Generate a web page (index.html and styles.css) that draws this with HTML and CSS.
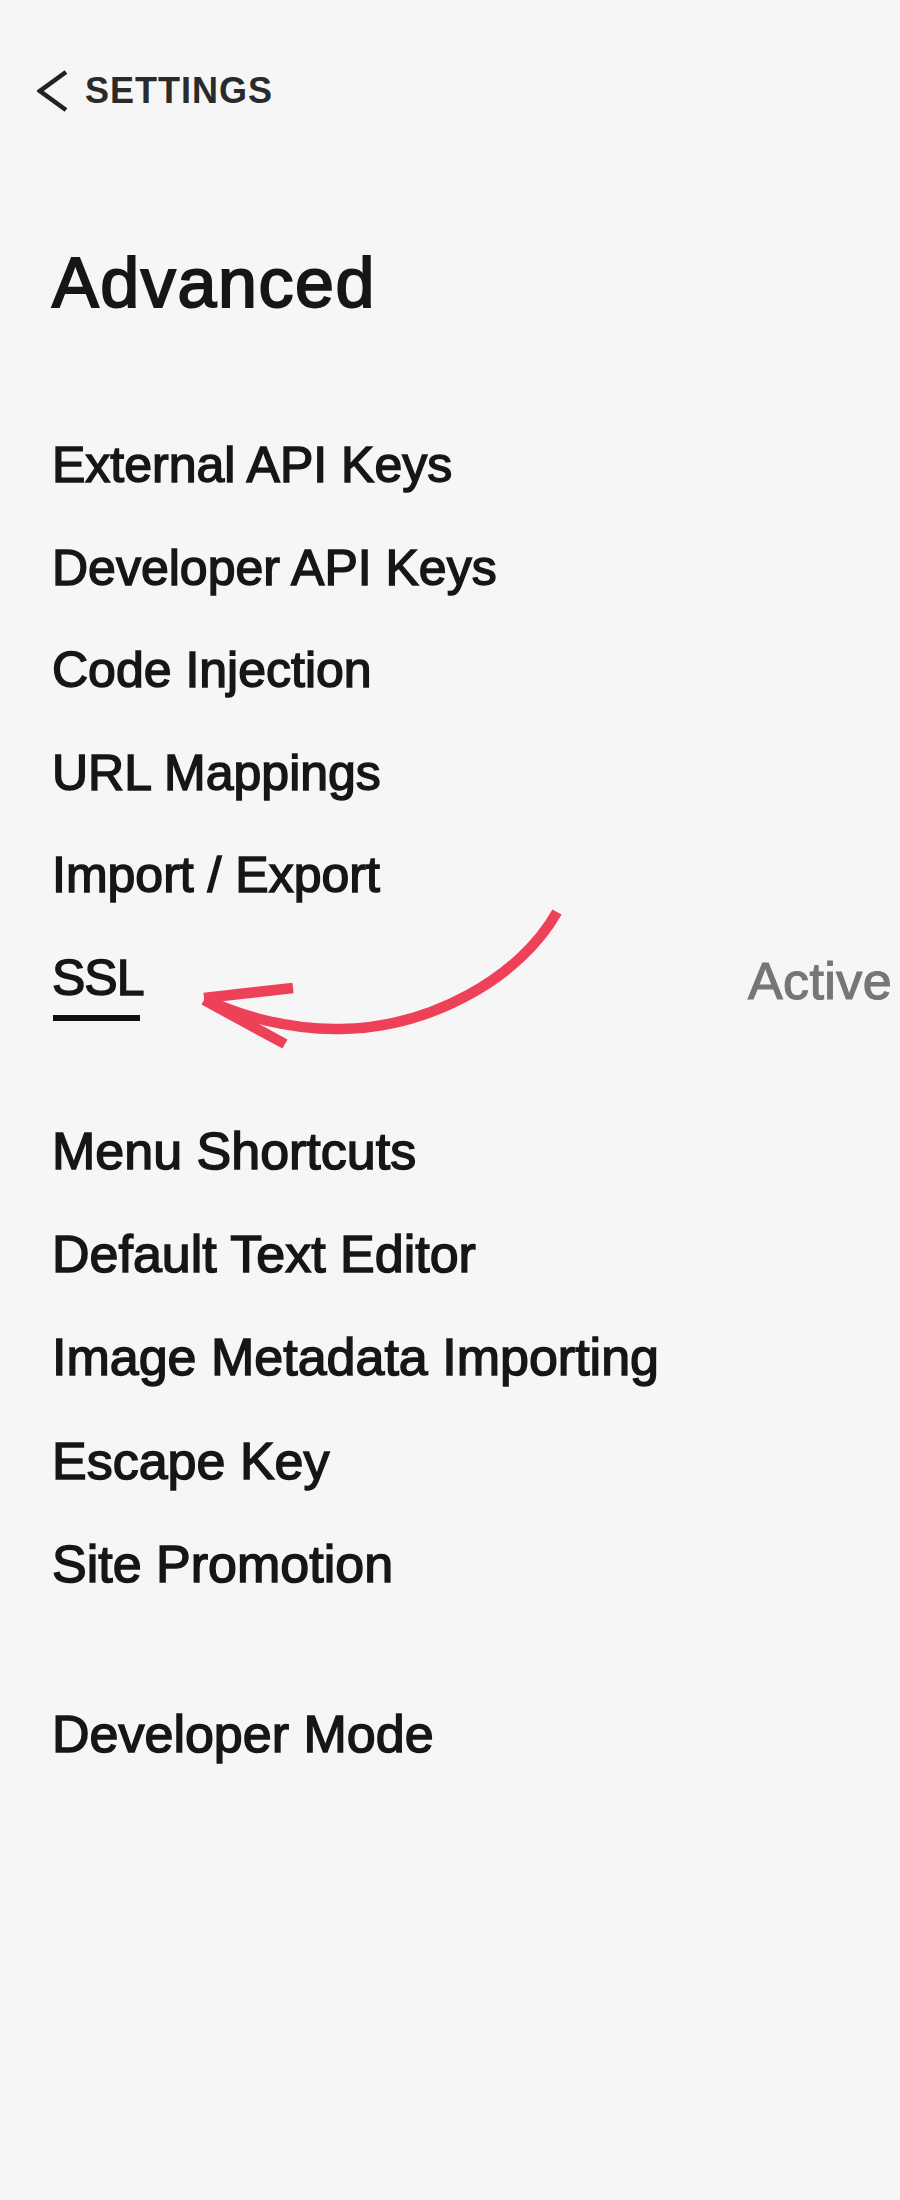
FILE: index.html
```html
<!DOCTYPE html>
<html lang="en">
<head>
<meta charset="utf-8">
<title>Advanced</title>
<link rel="stylesheet" href="styles.css">
</head>
<body>
<div class="page">
  <a class="back" href="#">
    <svg class="chev" width="32" height="42" viewBox="0 0 32 42"><polyline points="29,2 3,21 29,40" fill="none" stroke="#222" stroke-width="4.6" stroke-linejoin="miter"/></svg>
    <span class="back-label">SETTINGS</span>
  </a>
  <h1 class="title">Advanced</h1>
  <ul class="list list-a">
    <li class="item">External API Keys</li>
    <li class="item">Developer API Keys</li>
    <li class="item">Code Injection</li>
    <li class="item">URL Mappings</li>
    <li class="item">Import / Export</li>
    <li class="item row"><span class="ssl">SSL</span><span class="status">Active</span></li>
  </ul>
  <ul class="list list-b">
    <li class="item">Menu Shortcuts</li>
    <li class="item">Default Text Editor</li>
    <li class="item">Image Metadata Importing</li>
    <li class="item">Escape Key</li>
    <li class="item">Site Promotion</li>
  </ul>
  <ul class="list list-c">
    <li class="item">Developer Mode</li>
  </ul>
  <svg class="arrow" width="380" height="160" viewBox="0 0 380 160">
    <g fill="none" stroke="#ee4158" stroke-width="10.5" stroke-linecap="butt">
      <path d="M367,12 C330,78 240,128 150,129 C100,130 50,116 15,99"/>
      <path d="M14,98 L103,88"/>
      <path d="M14,100 L95,144"/>
    </g>
  </svg>
</div>
</body>
</html>
```
FILE: styles.css
```css
html, body {
  margin: 0;
  padding: 0;
  background: #f6f6f6;
}
body {
  font-family: "Liberation Sans", Arial, sans-serif;
  color: #161616;
}
.page {
  position: relative;
  padding: 70px 6px 0 52px;
  min-height: 2130px;
}
.back {
  display: flex;
  align-items: center;
  gap: 16px;
  height: 42px;
  margin-left: -15px;
  text-decoration: none;
  color: #2a2a2a;
}
.chev {
  display: block;
  flex: none;
}
.back-label {
  font-size: 36px;
  line-height: 42px;
  font-weight: 700;
  letter-spacing: 1px;
}
.title {
  margin: 131px 0 0;
  font-size: 70px;
  line-height: 80px;
  font-weight: 400;
  letter-spacing: 1.6px;
  -webkit-text-stroke: 2px #161616;
}
.list {
  list-style: none;
  margin: 0;
  padding: 0;
}
.item {
  -webkit-text-stroke: 1.5px #161616;
}
.list-a {
  margin-top: 91px;
  font-size: 50px;
  line-height: 102.5px;
}
.list-b {
  margin-top: 71px;
  font-size: 52px;
  line-height: 103.2px;
}
.list-c {
  margin-top: 67px;
  font-size: 52px;
  line-height: 103.2px;
}
.row {
  display: flex;
  justify-content: space-between;
}
.ssl {
  position: relative;
  line-height: 56px;
  align-self: center;
  letter-spacing: -1px;
}
.ssl::after {
  content: "";
  position: absolute;
  left: 1px;
  width: 87px;
  height: 6px;
  top: 65px;
  background: #111;
}
.status {
  color: #767676;
  -webkit-text-stroke: 1.2px #767676;
  font-size: 52px;
  letter-spacing: 0.4px;
  position: relative;
  top: 3px;
  margin-right: 2px;
}
.arrow {
  position: absolute;
  left: 190px;
  top: 900px;
  pointer-events: none;
}
```
